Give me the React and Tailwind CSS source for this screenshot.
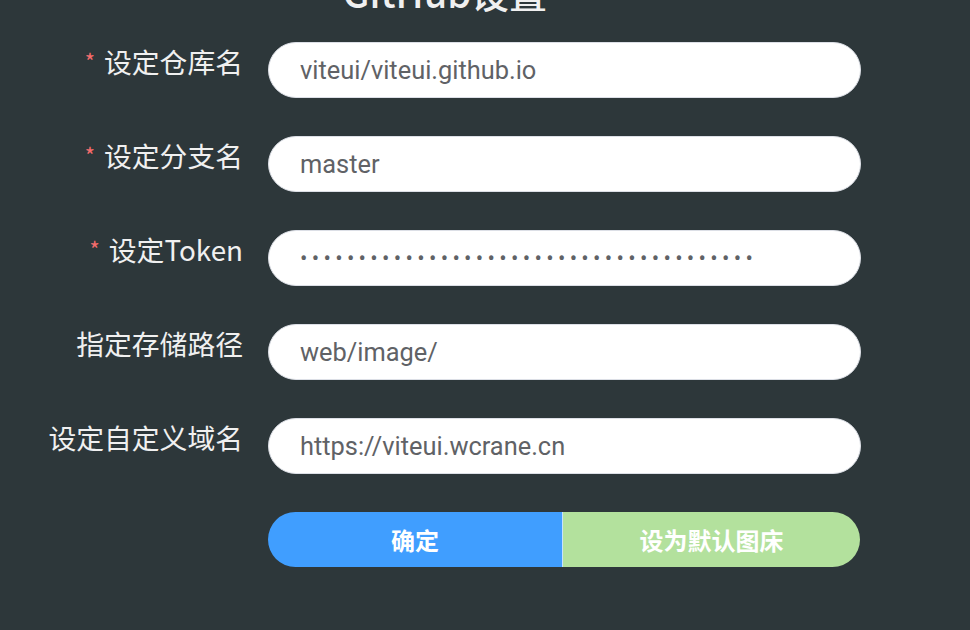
import React from 'react';

const fields = [
  { label: '设定仓库名', value: 'viteui/viteui.github.io', required: true },
  { label: '设定分支名', value: 'master', required: true },
  { label: '设定Token', value: 'ghp_aBcDeFgHiJkLmNoPqRsTuVwXyZ012345678', required: true, password: true },
  { label: '指定存储路径', value: 'web/image/' },
  { label: '设定自定义域名', value: 'https://viteui.wcrane.cn' },
];

const cjk = { fontFamily: '"Noto Sans CJK SC", "Noto Sans", sans-serif' };
const latin = { fontFamily: 'Roboto, "Noto Sans CJK SC", sans-serif' };

export default function App() {
  return (
    <div className="w-[970px] h-[630px] overflow-hidden bg-[#2d373a]" style={cjk}>
      {/* Title, mostly scrolled above the viewport */}
      <h1 className="-mt-[27px] h-[39px] text-center text-[38px] leading-none font-medium text-[#f0f0f0] pr-[80px]">
        GitHub设置
      </h1>

      <div className="mt-[30px] flex flex-col gap-[38px]">
        {fields.map((f) => (
          <div key={f.label} className="flex items-start">
            <label className="w-[243px] pt-[1px] text-right text-[27.8px] leading-[36px] text-[#f0f0f0]">
              {f.required && <span className="text-[#f56c6c] text-[22px] mr-[9px] relative -top-[3px]">*</span>}
              {f.label}
            </label>
            <input
              readOnly
              type={f.password ? 'password' : 'text'}
              value={f.value}
              className={
                f.password
                  ? 'ml-[25px] w-[593px] h-[56px] rounded-full bg-white border border-[#dcdfe6] px-[31px] text-[22px] tracking-[4.3px] text-[#606266] outline-none'
                  : 'ml-[25px] w-[593px] h-[56px] rounded-full bg-white border border-[#dcdfe6] px-[31px] text-[25.4px] text-[#606266] outline-none'
              }
              style={latin}
            />
          </div>
        ))}
      </div>

      <div className="mt-[38px] ml-[268px] flex w-[592px] h-[55px] rounded-full overflow-hidden">
        <button className="w-[294px] bg-[#409eff] text-white text-[24px] font-bold">确定</button>
        <div className="w-[1px] bg-[#c6e2ff]" />
        <button className="flex-1 bg-[#b3e19d] text-white text-[24px] font-bold">设为默认图床</button>
      </div>
    </div>
  );
}
